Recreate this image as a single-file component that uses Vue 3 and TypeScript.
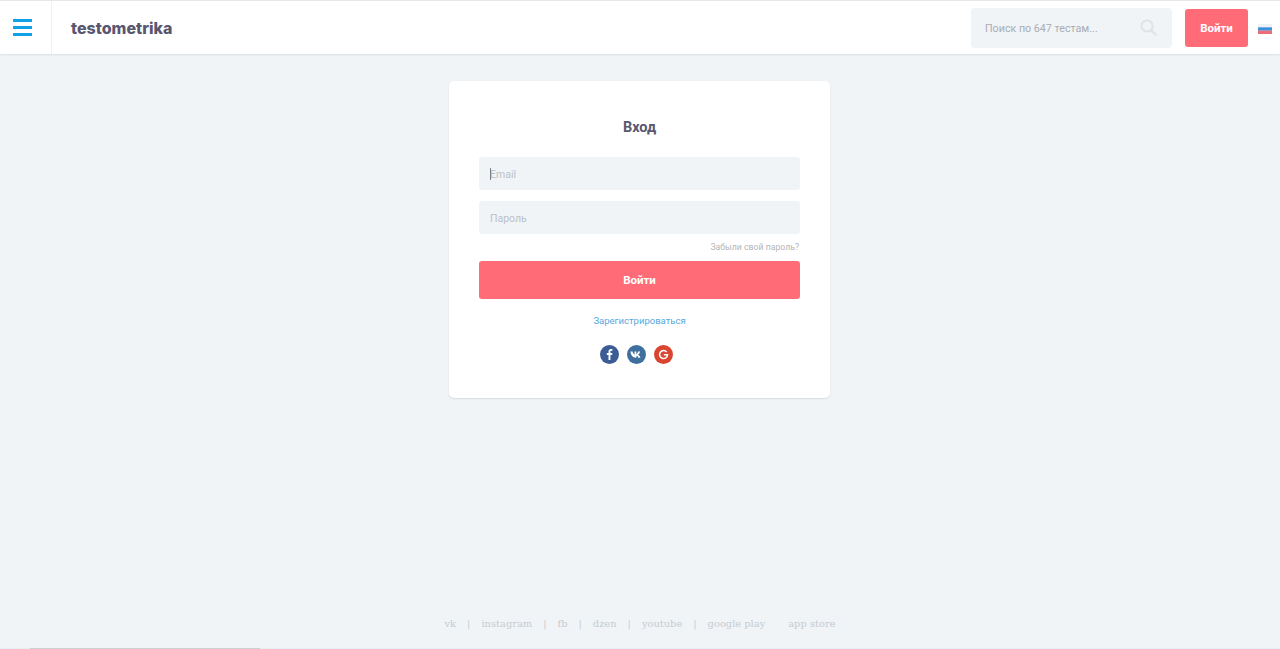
<script setup lang="ts">
const links: string[] = ['vk', 'instagram', 'fb', 'dzen', 'youtube']
</script>

<template>
  <div class="page">
    <header class="topbar">
      <button class="burger" aria-label="Меню">
        <svg width="19" height="17" viewBox="0 0 19 17"><path d="M0 1.500h19M0 8.500h19M0 15.500h19" stroke="#12a0e6" stroke-width="3" fill="none" /></svg>
      </button>
      <a class="logo">testometrika</a>
      <div class="search">
        <span>Поиск по 647 тестам...</span>
        <svg width="17" height="17" viewBox="0 0 17 17" fill="none" stroke="#dfe3e6" stroke-width="2"><circle cx="7" cy="7" r="5.600" /><path d="M11.200 11.200l4.600 4.600" stroke-linecap="round" /></svg>
      </div>
      <button class="enter">Войти</button>
      <svg class="flag" width="14" height="10" viewBox="0 0 14 10"><rect width="14" height="3.300" fill="#eef1f5" /><rect y="3.300" width="14" height="3.400" fill="#3f8fd8" /><rect y="6.700" width="14" height="3.300" fill="#ee6b77" /></svg>
    </header>

    <main class="content">
      <section class="card">
        <h1>Вход</h1>
        <div class="field">
          <input type="text" placeholder="Email" />
          <i class="caret"></i>
        </div>
        <div class="field second">
          <input type="password" placeholder="Пароль" />
        </div>
        <a class="forgot">Забыли свой пароль?</a>
        <button class="submit">Войти</button>
        <a class="register">Зарегистрироваться</a>
        <div class="socials">
          <span class="soc fb">
            <svg width="19" height="19" viewBox="0 0 19 19"><path d="M10.400 15v-5h1.700l.3-2h-2V6.800c0-.6.2-1 1-1h1V4.100c-.3 0-.8-.1-1.400-.1-1.500 0-2.500.9-2.500 2.600V8H6.800v2h1.700v5z" fill="#fff" /></svg>
          </span>
          <span class="soc vk">
            <svg width="19" height="19" viewBox="0 0 19 19"><path d="M3.500 6.500h2c.5 1.600 1.400 3 2 3.200V6.500h1.900v2.700c.6-.1 1.300-1.200 1.800-2.700h1.900c-.3 1.600-1.300 2.800-2 3.300.7.400 1.800 1.300 2.400 2.900h-2.100c-.4-1.100-1.200-1.900-2-2v2H9c-2.900 0-5.100-2-5.500-6.200z" fill="#fff" /></svg>
          </span>
          <span class="soc gg">
            <svg width="19" height="19" viewBox="0 0 19 19" fill="none"><path d="M12.700 7a4 4 0 1 0 .9 2.800H9.800" stroke="#fff" stroke-width="1.500" /></svg>
          </span>
        </div>
      </section>
    </main>

    <footer class="footer">
      <template v-for="l in links" :key="l">
        <a>{{ l }}</a><b>|</b>
      </template>
      <a>google play</a>
      <a class="last">app store</a>
    </footer>
    <div class="strip"><span></span></div>
  </div>
</template>

<style>
html, body { margin: 0; background: #f0f4f7; }
</style>

<style scoped>
.page {
  height: 649px;
  display: flex;
  flex-direction: column;
  background: #f0f4f7;
  font-family: Roboto, "Liberation Sans", sans-serif;
  overflow: hidden;
}
.topbar {
  height: 53px;
  margin-top: 1px;
  flex: none;
  display: flex;
  align-items: center;
  background: #fff;
  box-shadow: 0 1px 2px rgba(0, 0, 0, .09), 0 -1px 1px rgba(0, 0, 0, .04);
}
.burger {
  width: 52px;
  height: 100%;
  flex: none;
  padding: 0 6px 0 0;
  border: 0;
  border-right: 1px solid #eff1f3;
  background: none;
  display: flex;
  align-items: center;
  justify-content: center;
  box-sizing: border-box;
}
.logo {
  margin-left: 19px;
  font: 800 16px Inter, sans-serif;
  color: #595770;
}
.search {
  margin-left: auto;
  width: 201px;
  height: 40px;
  box-sizing: border-box;
  padding: 0 15px 0 14px;
  display: flex;
  align-items: center;
  justify-content: space-between;
  background: #f0f4f7;
  border-radius: 4px;
  font-size: 10.700px;
  color: #a9adb4;
}
.search span { padding-top: 2px; }
.enter {
  margin-left: 13px;
  width: 63px;
  height: 38px;
  border: 0;
  border-radius: 3px;
  background: #ff6b76;
  color: #fff;
  font: 700 11.500px Roboto, sans-serif;
  padding: 0;
}
.flag { margin: 2px 8px 0 10px; flex: none; }
.content {
  flex: 1;
  display: flex;
  justify-content: center;
  padding: 27px 1px 0 0;
}
.card {
  width: 381px;
  height: 317px;
  box-sizing: border-box;
  padding: 0 30px;
  background: #fff;
  border-radius: 5px;
  box-shadow: 0 1px 2px rgba(0, 0, 0, .1);
  display: flex;
  flex-direction: column;
}
h1 {
  margin: 37px 0 0;
  height: 19px;
  font-size: 14.500px;
  line-height: 19px;
  font-weight: 700;
  text-align: center;
  color: #5a586e;
}
.field { position: relative; margin-top: 20px; height: 33px; flex: none; }
.field.second { margin-top: 11px; }
.field input {
  width: 100%;
  height: 100%;
  box-sizing: border-box;
  padding: 1px 11px 0;
  border: 0;
  outline: 0;
  border-radius: 3px;
  background: #f0f4f7;
  font: 400 10.500px Roboto, sans-serif;
  color: #55536a;
}
.field input::placeholder { color: #bcc0c6; opacity: 1; }
.caret {
  position: absolute;
  left: 11px;
  top: 11px;
  width: 1px;
  height: 12px;
  background: #7a7d85;
}
.forgot {
  margin-top: 7px;
  padding-right: 1px;
  height: 13px;
  line-height: 13px;
  text-align: right;
  font-size: 8.700px;
  color: #b4b6ba;
}
.submit {
  margin-top: 7px;
  height: 38px;
  flex: none;
  padding: 0;
  border: 0;
  border-radius: 3px;
  background: #ff6b76;
  color: #fff;
  font: 700 11.500px Roboto, sans-serif;
}
.register {
  margin-top: 15px;
  height: 14px;
  line-height: 14px;
  text-align: center;
  font-size: 9.500px;
  color: #55a8df;
}
.socials {
  margin: 17px 6px 0 0;
  display: flex;
  justify-content: center;
  gap: 8px;
}
.soc { width: 19px; height: 19px; border-radius: 50%; display: block; }
.soc svg { display: block; }
.fb { background: #3b5c94; }
.vk { background: #3f6f9f; }
.gg { background: #d9452f; }
.footer {
  height: 24px;
  margin-bottom: 13px;
  flex: none;
  display: flex;
  justify-content: center;
  align-items: center;
  font: 400 9.900px "DejaVu Serif", serif;
  color: #c6cbd1;
}
.footer b { font-weight: 400; margin: 0 11px; }
.footer .last { margin-left: 23px; }
.strip {
  height: 1px;
  flex: none;
  background: #e6edf3;
}
.strip span {
  display: block;
  height: 1px;
  width: 230px;
  margin-left: 30px;
  background: #d0d0d0;
}
</style>
